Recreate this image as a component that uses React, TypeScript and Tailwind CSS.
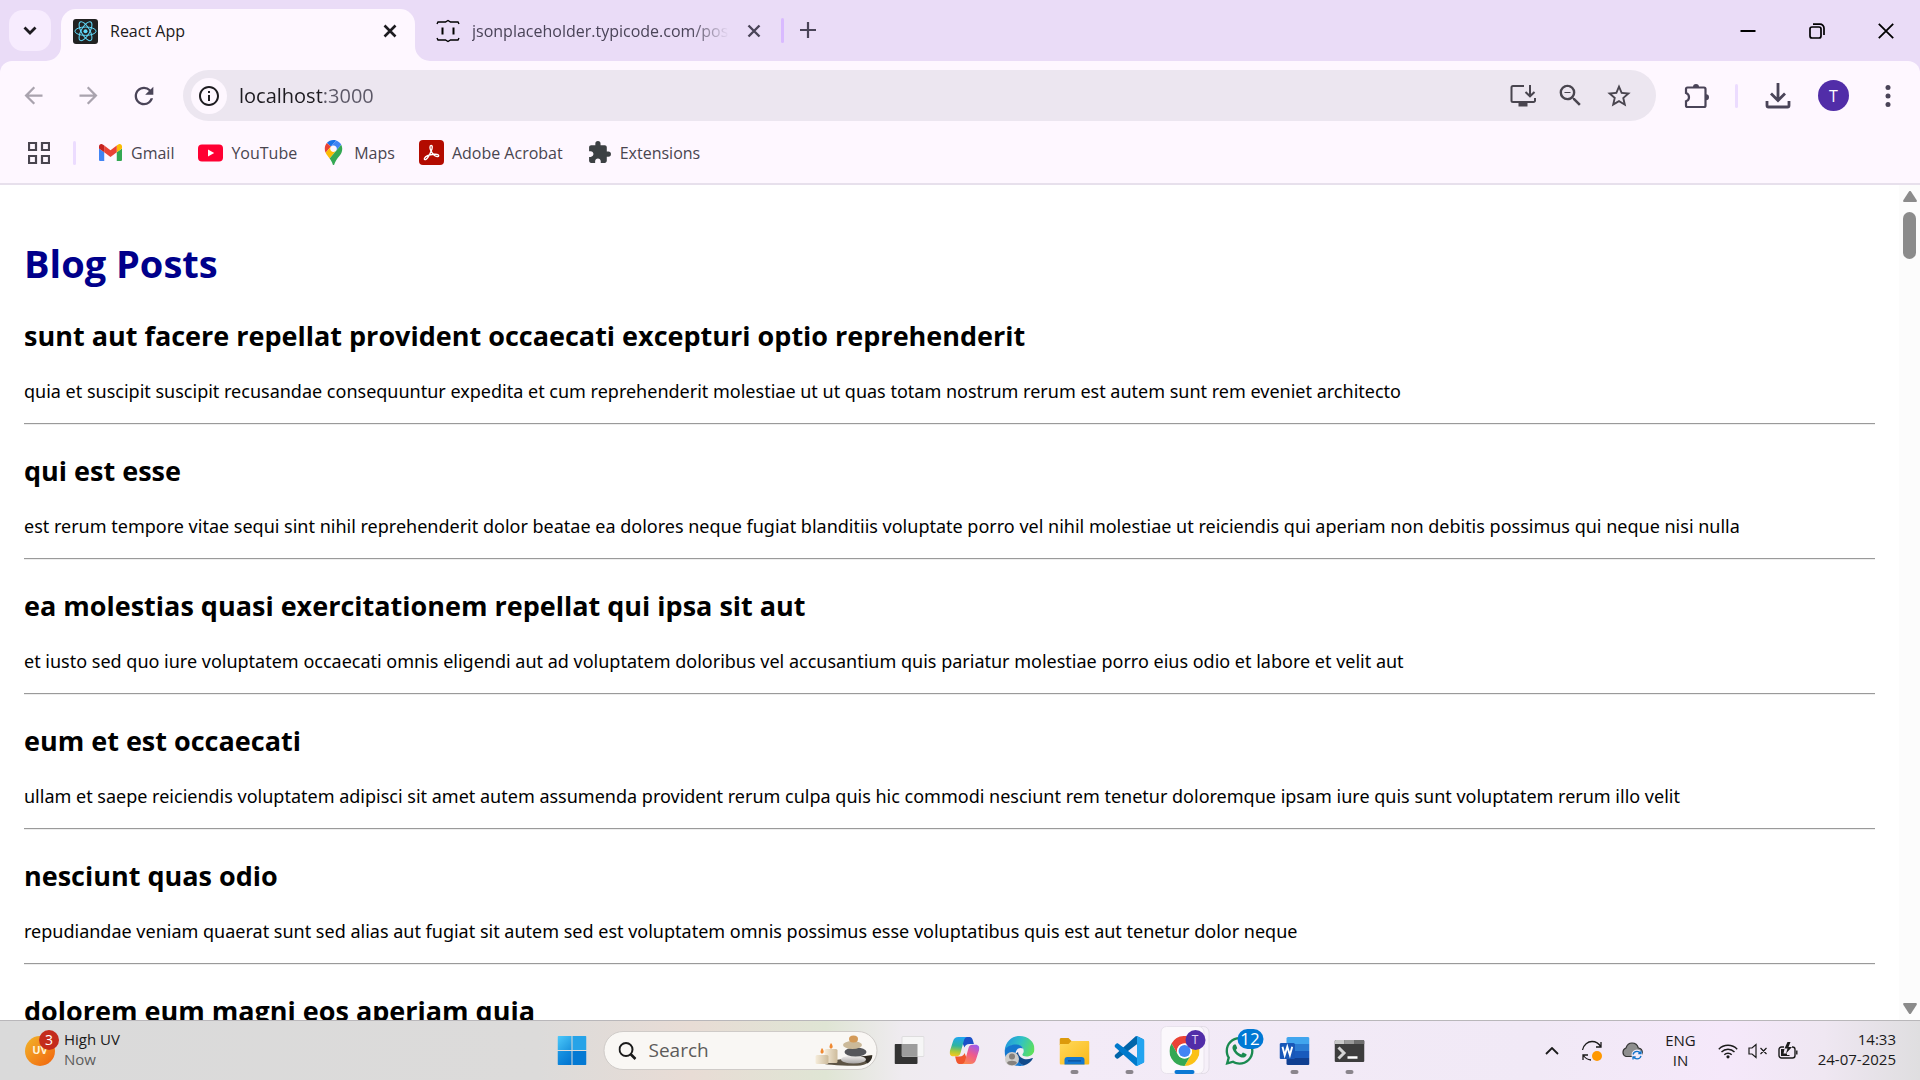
import React from "react";
import {
  MdArrowBack,
  MdArrowForward,
  MdExtension,
  MdInfoOutline,
  MdRefresh,
  MdStarBorder,
  MdZoomOut,
} from "react-icons/md";
import { FaWhatsapp } from "react-icons/fa";

type Post = { title: string; body: string };

const posts: Post[] = [
  {
    title: "sunt aut facere repellat provident occaecati excepturi optio reprehenderit",
    body: "quia et suscipit suscipit recusandae consequuntur expedita et cum reprehenderit molestiae ut ut quas totam nostrum rerum est autem sunt rem eveniet architecto",
  },
  {
    title: "qui est esse",
    body: "est rerum tempore vitae sequi sint nihil reprehenderit dolor beatae ea dolores neque fugiat blanditiis voluptate porro vel nihil molestiae ut reiciendis qui aperiam non debitis possimus qui neque nisi nulla",
  },
  {
    title: "ea molestias quasi exercitationem repellat qui ipsa sit aut",
    body: "et iusto sed quo iure voluptatem occaecati omnis eligendi aut ad voluptatem doloribus vel accusantium quis pariatur molestiae porro eius odio et labore et velit aut",
  },
  {
    title: "eum et est occaecati",
    body: "ullam et saepe reiciendis voluptatem adipisci sit amet autem assumenda provident rerum culpa quis hic commodi nesciunt rem tenetur doloremque ipsam iure quis sunt voluptatem rerum illo velit",
  },
  {
    title: "nesciunt quas odio",
    body: "repudiandae veniam quaerat sunt sed alias aut fugiat sit autem sed est voluptatem omnis possimus esse voluptatibus quis est aut tenetur dolor neque",
  },
  { title: "dolorem eum magni eos aperiam quia", body: "" },
];

/* ---------- small drawings ---------- */

function ReactFavicon() {
  return (
    <svg viewBox="0 0 25 25" className="size-[25px] shrink-0" aria-hidden="true">
      <rect width="25" height="25" rx="3" fill="#222" />
      <g fill="none" stroke="#61dafb" strokeWidth="1">
        <ellipse cx="12.5" cy="12.2" rx="10.6" ry="4.2" />
        <ellipse cx="12.5" cy="12.2" rx="10.6" ry="4.2" transform="rotate(60 12.5 12.2)" />
        <ellipse cx="12.5" cy="12.2" rx="10.6" ry="4.2" transform="rotate(120 12.5 12.2)" />
      </g>
      <circle cx="12.5" cy="12.2" r="2" fill="#61dafb" />
    </svg>
  );
}

function BracesFavicon() {
  return (
    <svg viewBox="0 0 24 24" className="size-6 shrink-0" fill="none" stroke="#000" strokeWidth="1.4" aria-hidden="true">
      <path d="M1 5l1-2h7.500L12 1.500 14.500 3H22l1 2M1 19l1 2h7.500l2.500 1.500 2.500-1.500H22l1-2" />
      <path d="M6.500 8.500V15.500M17.500 8.500V15.500" strokeWidth="2" />
    </svg>
  );
}

function Cross({ className, width }: { className: string; width: number }) {
  return (
    <svg viewBox="0 0 16 16" className={className} fill="none" stroke="currentColor" strokeWidth={width} aria-hidden="true">
      <path d="M2.500 2.500l11 11M13.500 2.500l-11 11" />
    </svg>
  );
}

function GmailIcon() {
  return (
    <svg viewBox="52 42 88 66" className="w-[23px]" aria-hidden="true">
      <path fill="#4285f4" d="M58 108h14V74L52 59v43c0 3.320 2.690 6 6 6" />
      <path fill="#34a853" d="M120 108h14c3.320 0 6-2.690 6-6V59l-20 15" />
      <path fill="#fbbc04" d="M120 48v26l20-15v-8c0-7.420-8.470-11.650-14.400-7.200" />
      <path fill="#ea4335" d="M72 74V48l24 18 24-18v26L96 92" />
      <path fill="#c5221f" d="M52 51v8l20 15V48l-5.600-4.200c-5.940-4.450-14.400-.220-14.400 7.200" />
    </svg>
  );
}

function YouTubeIcon() {
  return (
    <svg viewBox="0 0 25 18" className="w-[25px]" aria-hidden="true">
      <rect y="0.500" width="25" height="17" rx="4" fill="#ff0033" />
      <path d="M10 5.500v7L16.200 9z" fill="#fff" />
    </svg>
  );
}

function MapsIcon() {
  return (
    <svg viewBox="0 0 92.3 132.3" className="h-[25px] w-[25px]" aria-hidden="true">
      <path fill="#1a73e8" d="M60.2 2.2C55.8.8 51 0 46.1 0 32 0 19.3 6.4 10.8 16.5l21.8 18.3L60.2 2.200z" />
      <path fill="#ea4335" d="M10.8 16.5C4.1 24.5 0 34.9 0 46.100c0 8.700 1.700 15.700 4.600 22l28-33.300-21.800-18.300z" />
      <path fill="#4285f4" d="M46.2 28.5c9.8 0 17.7 7.9 17.7 17.7 0 4.300-1.600 8.300-4.200 11.400 0 0 13.900-16.600 27.500-32.700-5.600-10.800-15.300-19-27-22.700L32.600 34.800c3.300-3.800 8.100-6.300 13.600-6.300" />
      <path fill="#fbbc04" d="M46.2 63.8c-9.800 0-17.700-7.900-17.700-17.700 0-4.300 1.500-8.300 4.100-11.300l-28 33.300c4.800 10.600 12.800 19.200 21 29.900l34.100-40.500c-3.300 3.900-8.100 6.300-13.500 6.300" />
      <path fill="#34a853" d="M59.1 109.2c15.4-24.100 33.300-35 33.300-63 0-7.700-1.900-14.900-5.200-21.300L25.600 98c2.600 3.400 5.300 7.300 7.900 11.300 9.400 14.500 6.800 23.100 12.800 23.100s3.400-8.700 12.800-23.200" />
    </svg>
  );
}

function AcrobatIcon() {
  return (
    <svg viewBox="0 0 25 25" className="w-[25px]" aria-hidden="true">
      <rect width="25" height="25" rx="4" fill="#b30b00" />
      <path
        d="M11.800 10.500c-1-2.200-1.300-5 .300-5.100 1.700 0 1.300 3.200.100 5.600-1.300 3.200-3.300 7-5.200 8.300-1.100.700-2-.100-1.500-1.100.900-1.800 5-3.500 9.300-3.900 2.300-.200 5 .100 4.900 1.500-.200 1.300-2.600.900-4.200-.300-1.600-1.200-2.800-2.900-3.700-5z"
        fill="none"
        stroke="#fff"
        strokeWidth="1.400"
      />
    </svg>
  );
}

function AppsIcon() {
  return (
    <svg viewBox="0 0 22 22" className="size-[22px]" fill="none" stroke="#49454f" strokeWidth="2.200" aria-hidden="true">
      <path d="M1 1h7v7H1zM14 1h7v7h-7zM1 14h7v7H1zM14 14h7v7h-7z" />
    </svg>
  );
}

function InstallIcon() {
  return (
    <svg viewBox="0 0 26 24" className="w-[26px]" fill="none" stroke="#49454f" strokeWidth="2" aria-hidden="true">
      <path d="M14 2H3a1.500 1.500 0 0 0-1.500 1.500v13A1.500 1.500 0 0 0 3 18h20.500a1.500 1.500 0 0 0 1.500-1.500V14" />
      <path d="M20 1v11M15.500 8l4.500 4.300L24.500 8" />
      <path d="M8.500 20.500h9" strokeWidth="4" />
    </svg>
  );
}

function PuzzleOutline() {
  return (
    <svg viewBox="0 0 26 26" className="w-[26px]" aria-hidden="true">
      <path
        d="M3.500 4.500h16.500a1.500 1.500 0 0 1 1.500 1.500v16.500a1.500 1.500 0 0 1-1.500 1.500H3.500a1.500 1.500 0 0 1-1.500-1.500v-4.200c4-1.400 4-6.900 0-8.300V6a1.500 1.500 0 0 1 1.500-1.500z"
        fill="none"
        stroke="#4a4458"
        strokeWidth="2.200"
      />
      <path d="M9 4a3 3 0 0 1 6 0zM22 11.200a3 3 0 0 1 0 6z" fill="#4a4458" />
    </svg>
  );
}

function DownloadIcon() {
  return (
    <svg viewBox="0 0 26 26" className="w-[26px]" fill="none" stroke="#4a4458" strokeWidth="2.800" aria-hidden="true">
      <path d="M13 0v17M6 10.500l7 7 7-7" />
      <path d="M2 18v4.500a1.500 1.500 0 0 0 1.500 1.500h19a1.500 1.500 0 0 0 1.500-1.500V18" />
    </svg>
  );
}

function WindowsLogo() {
  return (
    <svg viewBox="0 0 29 29" className="size-[29px]" aria-hidden="true">
      <defs>
        <linearGradient id="win" x1="0" y1="0" x2="1" y2="1">
          <stop offset="0" stopColor="#4cc9fb" />
          <stop offset="1" stopColor="#1b93dd" />
        </linearGradient>
        <linearGradient id="win2" x1="0" y1="0" x2="1" y2="1">
          <stop offset="0" stopColor="#1a97e4" />
          <stop offset="1" stopColor="#0072cf" />
        </linearGradient>
      </defs>
      <path d="M1 0h13v14H0V1a1 1 0 0 1 1-1z" fill="url(#win)" />
      <path d="M15 0h13a1 1 0 0 1 1 1v13H15z" fill="#26a3e8" />
      <path d="M0 15h14v14H1a1 1 0 0 1-1-1z" fill="url(#win2)" />
      <path d="M15 15h14v13a1 1 0 0 1-1 1H15z" fill="#0479d3" />
    </svg>
  );
}

function ZenPicture() {
  return (
    <svg viewBox="0 0 58 32" className="h-8 w-[58px] shrink-0" aria-hidden="true">
      <defs>
        <linearGradient id="candle" x1="0" x2="1">
          <stop offset="0" stopColor="#f6eddb" />
          <stop offset="1" stopColor="#cdbb9b" />
        </linearGradient>
        <linearGradient id="stone" x1="0" y1="0" x2="0" y2="1">
          <stop offset="0" stopColor="#f3f1ef" />
          <stop offset="1" stopColor="#a9a6a5" />
        </linearGradient>
      </defs>
      <path d="M2 27.500L58 20c-1 5-5 11-16 10.800C25 31 10 29.500 2 27.500z" fill="#5d5444" />
      <path d="M46 21.500l12-1c-.500 3-2 6-5 8z" fill="#2f2a22" />
      <rect x="10" y="14" width="13" height="14" rx="1.500" fill="url(#candle)" />
      <rect x="1" y="20" width="13" height="9" rx="1.500" fill="url(#candle)" />
      <path d="M16.500 8c2.500 3 2 5.500 0 5.500s-2-2.500 0-5.500zM7.500 13c2.500 3 2 5.500 0 5.500s-2-2.500 0-5.500z" fill="#f08a32" />
      <ellipse cx="39" cy="24.500" rx="12.500" ry="4" fill="url(#stone)" />
      <ellipse cx="41" cy="17" rx="11" ry="4.500" fill="#55565a" />
      <ellipse cx="38" cy="10" rx="9.500" ry="4" fill="#cbb999" />
      <ellipse cx="39" cy="4" rx="4.500" ry="3.500" fill="#d39a58" />
    </svg>
  );
}

function TaskViewIcon() {
  return (
    <svg viewBox="0 0 30 30" className="size-[30px]" aria-hidden="true">
      <rect x="0" y="8" width="23" height="20" rx="1" fill="#333" />
      <rect x="7.500" y="0.500" width="22" height="20" rx="1" fill="#f6f6f6" stroke="#d0d0d0" strokeWidth="0.600" />
      <path d="M7.500 8H23v12.500H8.500a1 1 0 0 1-1-1z" fill="#9c9c9c" />
    </svg>
  );
}

function CopilotIcon() {
  return (
    <svg viewBox="0 0 30 30" className="size-[30px]" aria-hidden="true">
      <defs>
        <linearGradient id="cpA" x1="0.400" y1="0" x2="0.300" y2="1">
          <stop offset="0" stopColor="#1fa6f0" />
          <stop offset="0.450" stopColor="#2fb4a0" />
          <stop offset="0.750" stopColor="#a8c83a" />
          <stop offset="1" stopColor="#f8c81c" />
        </linearGradient>
        <linearGradient id="cpB" x1="0.700" y1="0" x2="0.200" y2="1">
          <stop offset="0" stopColor="#a05be8" />
          <stop offset="0.450" stopColor="#ef5a8c" />
          <stop offset="1" stopColor="#fb8a4e" />
        </linearGradient>
      </defs>
      <path d="M14 1h6c2 0 2.800 1.400 3.400 3.500l1 3.500H20c-3 0-4.300 1.200-5 3.500L12 5z" fill="#1b51c8" />
      <path d="M9 1h9c-2 0-3 1.400-3.600 3.500L11 17c-.700 2.200-1.800 3.300-4 3.300H4C.8 20.300-.3 18 .4 15L3.600 5C4.500 2.300 6 1 9 1z" fill="url(#cpA)" />
      <path d="M16 28h-6c-2 0-2.800-1.400-3.400-3.500l-1-4H10c3 0 4.300-1.200 5-3.500L18 24z" fill="#f0562e" />
      <path d="M21 28h-9c2 0 3-1.400 3.600-3.500L19 12c.700-2.200 1.800-3.300 4-3.300h3c3.200 0 4.300 2.300 3.600 5.300L26.400 24c-.900 2.700-2.400 4-5.400 4z" fill="url(#cpB)" />
    </svg>
  );
}

function EdgeIcon() {
  return (
    <svg viewBox="0 0 30 30" className="size-[30px]" aria-hidden="true">
      <defs>
        <linearGradient id="edA" x1="0" y1="0.300" x2="1" y2="0.600">
          <stop offset="0" stopColor="#2196e0" />
          <stop offset="0.500" stopColor="#31c2c4" />
          <stop offset="1" stopColor="#5fe05a" />
        </linearGradient>
      </defs>
      <path d="M0 15C1 5 8 0 15 0c9 0 15 6 15 13 0 5-4 7.500-8 7.500-3 0-4.500-1-4-2.200.700-1 1.200-2 1.200-3.300 0-3.500-3-6-7.200-6C6 9 1 12 0 15z" fill="url(#edA)" />
      <path d="M0 15c1-4 6-6.500 11.500-6.500 3.500 0 6 1.500 7.200 4C14 10.500 10.500 14 11 19c.400 5 4 9 9 10.300-2 .700-4 .700-5 .700C7 30 0 24 0 15z" fill="#1577cf" />
      <path d="M11 18c0 6 4.500 10.500 9 11.300 3.500-1 6.500-3.300 8.200-6.500.300-.700-.300-1-1-.600-7 3-13.200-.700-13.700-6.200z" fill="#114a8b" />
      <circle cx="7.500" cy="23" r="7" fill="#cfcdca" />
      <circle cx="7.500" cy="20.500" r="3" fill="#85817d" />
      <path d="M2.500 27c.500-3 9.500-3 10 0-2 3-8 3-10 0z" fill="#85817d" />
    </svg>
  );
}

function ExplorerIcon() {
  return (
    <svg viewBox="0 0 30 30" className="size-[30px]" aria-hidden="true">
      <defs>
        <linearGradient id="fold" x1="0" y1="0" x2="1" y2="1">
          <stop offset="0" stopColor="#ffd95c" />
          <stop offset="1" stopColor="#fbb917" />
        </linearGradient>
      </defs>
      <path d="M0 3.500A1.500 1.500 0 0 1 1.500 2H9l3 3h17v4H0z" fill="#dc9a0c" />
      <path d="M0 8h9l3-3h16.500A1.500 1.500 0 0 1 30 6.500V27a1.500 1.500 0 0 1-1.500 1.500h-27A1.500 1.500 0 0 1 0 27z" fill="url(#fold)" />
      <path d="M5 28.500V24a3 3 0 0 1 3-3h14a3 3 0 0 1 3 3v4.500z" fill="#1277d0" />
      <path d="M8.500 24.800h13" stroke="#0b4f97" strokeWidth="1.200" />
    </svg>
  );
}

function VsCodeIcon() {
  return (
    <svg viewBox="0 0 100 100" className="size-[30px]" aria-hidden="true">
      <path d="M96.5 10.800L75.900.900a6.200 6.200 0 0 0-7.100 1.200L1.300 63.600a4.200 4.200 0 0 0 0 6.200l5.500 5c1.500 1.300 3.700 1.400 5.300.200l81.200-61.600c2.700-2.100 6.700-.100 6.700 3.300v-.200c0-2.400-1.400-4.600-3.500-5.700z" fill="#0065a9" />
      <path d="M96.5 89.200l-20.600 9.900a6.200 6.200 0 0 1-7.100-1.200L1.300 36.400a4.200 4.200 0 0 1 0-6.200l5.500-5c1.500-1.300 3.700-1.400 5.300-.200l81.200 61.600c2.700 2.100 6.700.100 6.700-3.300v.200c0 2.400-1.400 4.600-3.500 5.700z" fill="#007acc" />
      <path d="M75.900 99.100a6.200 6.200 0 0 1-7.100-1.200c2.300 2.300 6.200.700 6.200-2.600V4.700c0-3.300-3.900-4.900-6.200-2.600a6.200 6.200 0 0 1 7.100-1.200l20.600 9.900a6.300 6.300 0 0 1 3.500 5.700v67.100c0 2.400-1.400 4.600-3.500 5.700z" fill="#23a4f0" />
    </svg>
  );
}

function ChromeIcon() {
  return (
    <svg viewBox="0 0 48 48" className="size-[30px]" aria-hidden="true">
      <path d="M3.200 12A24 24 0 0 1 44.800 12H24a12 12 0 0 0-10.400 18z" fill="#ea4335" />
      <path d="M44.800 12A24 24 0 0 1 24 48l10.400-18A12 12 0 0 0 24 12z" fill="#fbc116" />
      <path d="M24 48A24 24 0 0 1 3.200 12l10.400 18a12 12 0 0 0 20.800 0z" fill="#34a853" />
      <circle cx="24" cy="24" r="12" fill="#fff" />
      <circle cx="24" cy="24" r="9.500" fill="#4285f4" />
    </svg>
  );
}

function WordIcon() {
  return (
    <svg viewBox="0 0 30 30" className="size-[30px]" aria-hidden="true">
      <path d="M7 2.500A1.500 1.500 0 0 1 8.500 1h20A1.500 1.500 0 0 1 30 2.500V8H7z" fill="#41a5ee" />
      <path d="M7 8h23v7H7z" fill="#2b7cd3" />
      <path d="M7 15h23v7H7z" fill="#185abd" />
      <path d="M7 22h23v5.500a1.500 1.500 0 0 1-1.500 1.500h-20A1.500 1.500 0 0 1 7 27.500z" fill="#103f91" />
      <rect x="0" y="7" width="15.500" height="16" rx="1.500" fill="#1857b8" />
      <path d="M3 10.800l2.200 8.400 2.600-8.400 2.600 8.400 2.300-8.400" fill="none" stroke="#fff" strokeWidth="1.900" />
    </svg>
  );
}

function TerminalIcon() {
  return (
    <svg viewBox="0 0 30 30" className="size-[30px]" aria-hidden="true">
      <rect x="0" y="4" width="30" height="22" rx="1.500" fill="#3d3d3d" />
      <path d="M0 8V5.500A1.500 1.500 0 0 1 1.500 4H10v4z" fill="#c9c9c9" />
      <path d="M10 4h10v4H10z" fill="#9a9a9a" />
      <path d="M20 4h8.500A1.500 1.500 0 0 1 30 5.500V8H20z" fill="#6e6e6e" />
      <path d="M4 11.500l5.500 5.500L4 22.500" fill="none" stroke="#d4d4d4" strokeWidth="3" />
      <path d="M13 21.500h10" stroke="#fff" strokeWidth="2.500" />
    </svg>
  );
}

function SyncIcon() {
  return (
    <svg viewBox="0 0 22 22" className="size-[22px]" fill="none" stroke="#1b1b1b" strokeWidth="1.300" aria-hidden="true">
      <path d="M1.500 10C2.500 4.500 7 1.500 11 1.500c4 0 7 2 9 5.500M20 2v5h-5" />
      <path d="M2 20v-5h5M2 15c2 3 4.500 4.800 8 5" />
      <circle cx="16" cy="16" r="5" fill="#ff9800" stroke="none" />
    </svg>
  );
}

function CloudIcon() {
  return (
    <svg viewBox="0 0 22 18" className="w-[22px]" aria-hidden="true">
      <path d="M5 14.500A4.500 4.500 0 0 1 5 6C6 2.800 8.500 1 11 1c3.500 0 5.500 2 6.300 5 2.500.300 4 2 4 4.300 0 2.500-1.800 4.200-4.300 4.200z" fill="#8e8e8e" stroke="#333" strokeWidth="1.200" />
      <circle cx="16" cy="13" r="5.500" fill="#f3eaf7" />
      <path d="M12 12.500c.500-2 2-3.200 4-3.200 1.500 0 2.700.700 3.500 1.900M20 8.800v2.700h-2.700M20 13.800c-.500 2-2 3-4 3-1.500 0-2.700-.700-3.500-1.700M12 17.500v-2.700h2.700" fill="none" stroke="#1173c9" strokeWidth="1.300" />
    </svg>
  );
}

function WifiGlyph() {
  return (
    <svg viewBox="0 0 20 16" className="w-5" fill="none" stroke="#1b1b1b" strokeWidth="1.400" aria-hidden="true">
      <path d="M.800 6.200c5-5.200 13.400-5.200 18.400 0M3.500 9c3.600-3.700 9.400-3.700 13 0M6.300 11.800c2-2.100 5.400-2.100 7.400 0" />
      <circle cx="10" cy="13.800" r="1.600" fill="#1b1b1b" stroke="none" />
    </svg>
  );
}

function MutedGlyph() {
  return (
    <svg viewBox="0 0 20 16" className="w-5" fill="none" stroke="#1b1b1b" strokeWidth="1.200" aria-hidden="true">
      <path d="M1 5h3l4-3.500v13L4 11H1zM12.500 5l6 6M18.500 5l-6 6" />
    </svg>
  );
}

function BatteryGlyph() {
  return (
    <svg viewBox="0 0 20 18" className="w-5" aria-hidden="true">
      <path d="M6 5H3.500A2.500 2.500 0 0 0 1 7.500v6A2.500 2.500 0 0 0 3.500 16h11a2.500 2.500 0 0 0 2.500-2.500v-6A2.500 2.500 0 0 0 14.500 5H14M18.800 8.500v4" fill="none" stroke="#1b1b1b" strokeWidth="1.400" />
      <path d="M3 7h3.500l-1 4.500H9v1.500h2.500V14H3z" fill="#1b1b1b" />
      <path d="M9.500 0L6.500 6.500h3L8 11.500 14 5h-3.500L12.500 0z" fill="#1b1b1b" />
    </svg>
  );
}

/* ---------- browser window ---------- */

function TabStrip() {
  return (
    <div className="flex h-[61px] shrink-0 items-end bg-[#eadcf7] text-[#1d1b20]">
      <button aria-label="Search tabs" className="mb-2.5 ml-[9px] flex h-[41px] w-[42px] items-center justify-center rounded-[14px] bg-[#f7ecfe]">
        <svg viewBox="0 0 14 10" className="w-3.5" fill="none" stroke="currentColor" strokeWidth="2.800">
          <path d="M1.500 1.500L7 7l5.500-5.500" />
        </svg>
      </button>

      <div className="relative ml-2.5 flex h-[52px] w-[354px] items-center rounded-t-[15px] bg-[#fef7ff] pr-2 pb-2 pl-3">
        <svg viewBox="0 0 15 15" className="absolute bottom-0 -left-[15px] size-[15px]" fill="#fef7ff" aria-hidden="true">
          <path d="M15 0v15H0A15 15 0 0 0 15 0z" />
        </svg>
        <svg viewBox="0 0 15 15" className="absolute -right-[15px] bottom-0 size-[15px]" fill="#fef7ff" aria-hidden="true">
          <path d="M0 0v15h15A15 15 0 0 1 0 0z" />
        </svg>
        <ReactFavicon />
        <span className="ml-3 flex-1 text-base">React App</span>
        <button aria-label="Close tab" className="flex size-[34px] items-center justify-center">
          <Cross className="size-4" width={2.6} />
        </button>
      </div>

      <div className="flex h-[52px] w-[364px] items-center pb-2 pl-[21px] text-[#4a4458]">
        <BracesFavicon />
        <span className="ml-3 w-[257px] overflow-hidden mask-r-from-85% text-base whitespace-nowrap">jsonplaceholder.typicode.com/posts</span>
        <button aria-label="Close tab" className="ml-2 flex size-[34px] items-center justify-center">
          <Cross className="size-4" width={2.4} />
        </button>
      </div>

      <div className="mb-[18px] ml-0.5 h-[25px] w-[3px] rounded-sm bg-[#d9baff]" />
      <button aria-label="New tab" className="mb-[15px] ml-2 flex size-8 items-center justify-center text-[#4a4458]">
        <svg viewBox="0 0 16 16" className="size-4" fill="none" stroke="currentColor" strokeWidth="2.200">
          <path d="M8 0v16M0 8h16" />
        </svg>
      </button>

      <div className="ml-auto flex h-full text-black">
        <button aria-label="Minimize" className="flex w-[69px] items-center justify-center">
          <svg viewBox="0 0 16 16" className="size-4" stroke="currentColor" strokeWidth="2">
            <path d="M.500 8h15" />
          </svg>
        </button>
        <button aria-label="Restore" className="flex w-[69px] items-center justify-center">
          <svg viewBox="0 0 16 16" className="size-4" fill="none" stroke="currentColor" strokeWidth="1.700">
            <rect x="1" y="4" width="11" height="11" rx="2" />
            <path d="M4 1.200h7a4 4 0 0 1 4 4V12" />
          </svg>
        </button>
        <button aria-label="Close" className="flex w-[69px] items-center justify-center">
          <svg viewBox="0 0 16 16" className="size-4" fill="none" stroke="currentColor" strokeWidth="1.800">
            <path d="M.800.800l14.400 14.400M15.200.800L.800 15.200" />
          </svg>
        </button>
      </div>
    </div>
  );
}

function Toolbar() {
  return (
    <div className="bg-[#eadcf7]">
      <div className="flex h-[69px] items-center rounded-t-xl bg-[#fef7ff] text-[#4a4458]">
        <div className="flex pl-1.5">
          <button aria-label="Back" className="flex h-12 w-[55px] items-center justify-center text-[#a9a3ae]">
            <MdArrowBack size={27} />
          </button>
          <button aria-label="Forward" className="flex h-12 w-[55px] items-center justify-center text-[#a9a3ae]">
            <MdArrowForward size={27} />
          </button>
          <button aria-label="Reload" className="flex h-12 w-[55px] items-center justify-center">
            <MdRefresh size={28} />
          </button>
        </div>

        <div className="ml-3 flex h-[51px] flex-1 items-center rounded-full bg-[#ece6f0] pr-[23px] pl-2">
          <button aria-label="View site information" className="flex size-9 items-center justify-center rounded-full bg-[#fef7ff] text-[#1d1b20]">
            <MdInfoOutline size={24} />
          </button>
          <input
            aria-label="Address"
            defaultValue="localhost:3000"
            className="ml-3 min-w-0 flex-1 bg-[linear-gradient(to_right,#1d1b20_85px,#5b5766_85px)] bg-clip-text text-xl text-transparent outline-none"
          />
          <div className="flex items-center gap-5 text-[#49454f]">
            <button aria-label="Install app"><InstallIcon /></button>
            <button aria-label="Zoom"><MdZoomOut size={29} /></button>
            <button aria-label="Bookmark this tab"><MdStarBorder size={28} /></button>
          </div>
        </div>

        <div className="flex items-center pl-7">
          <button aria-label="Extensions"><PuzzleOutline /></button>
          <div className="ml-[25px] h-6 w-[3px] rounded-sm bg-[#ecdcff]" />
          <button aria-label="Downloads" className="ml-[27px]"><DownloadIcon /></button>
          <button aria-label="Profile" className="ml-[27px] flex size-[31px] items-center justify-center rounded-full bg-[#512da8] text-base text-white">
            T
          </button>
          <button aria-label="Menu" className="mr-[21px] ml-[28px] flex w-[22px] justify-center">
            <svg viewBox="0 0 6 22" className="h-[22px]" fill="currentColor">
              <circle cx="3" cy="2.600" r="2.500" />
              <circle cx="3" cy="11" r="2.500" />
              <circle cx="3" cy="19.400" r="2.500" />
            </svg>
          </button>
        </div>
      </div>
    </div>
  );
}

function Bookmark({ icon, label }: { icon: React.ReactNode; label: string }) {
  return (
    <a href="#" className="flex items-center gap-2">
      <span className="flex w-[25px] justify-center">{icon}</span>
      <span>{label}</span>
    </a>
  );
}

function BookmarksBar() {
  return (
    <nav className="flex h-[55px] shrink-0 items-center border-b-2 border-[#e7e0ec] bg-[#fef7ff] pb-2 pl-7 text-base text-[#49454f]">
      <button aria-label="Apps"><AppsIcon /></button>
      <div className="mr-[22px] ml-[23px] h-6 w-[3px] rounded-sm bg-[#ecdcff]" />
      <div className="flex gap-6">
        <Bookmark icon={<GmailIcon />} label="Gmail" />
        <Bookmark icon={<YouTubeIcon />} label="YouTube" />
        <Bookmark icon={<MapsIcon />} label="Maps" />
        <Bookmark icon={<AcrobatIcon />} label="Adobe Acrobat" />
        <Bookmark icon={<MdExtension size={25} color="#3c4043" />} label="Extensions" />
      </div>
    </nav>
  );
}

function Scrollbar() {
  return (
    <div className="flex w-[21px] shrink-0 flex-col items-center bg-[#fcfcfc] py-1.5" aria-hidden="true">
      <svg viewBox="0 0 14 11" className="w-3.5" fill="#8b8b8b">
        <path d="M5.800.700a1.500 1.500 0 0 1 2.400 0l5.500 8.500c.400.900 0 1.800-1 1.800H1.300c-1 0-1.400-.900-1-1.800z" />
      </svg>
      <div className="mt-[10px] h-[47px] w-[13px] rounded-full bg-[#8b8b8b]" />
      <svg viewBox="0 0 14 11" className="mt-auto w-3.5 rotate-180" fill="#8b8b8b">
        <path d="M5.800.700a1.500 1.500 0 0 1 2.400 0l5.500 8.500c.400.900 0 1.800-1 1.800H1.300c-1 0-1.400-.900-1-1.800z" />
      </svg>
    </div>
  );
}

function BlogPage() {
  return (
    <div className="flex min-h-0 flex-1 bg-white">
      <main className="min-w-0 flex-1 overflow-hidden px-6 pt-[53px] text-black">
        <h1 className="mb-0.5 text-[38px] leading-[50px] font-bold text-[#00008b]">Blog Posts</h1>
        {posts.map((post) => (
          <article key={post.title}>
            <h2 className="pt-7 text-[27px] leading-9 font-bold whitespace-nowrap">{post.title}</h2>
            <p className="mt-[23px] mb-[18px] min-h-7 font-['Noto_Sans',sans-serif] text-lg leading-7 whitespace-nowrap">{post.body}</p>
            <hr className="border-t border-b border-t-[#9a9a9a] border-b-[#eeeeee]" />
          </article>
        ))}
      </main>
      <Scrollbar />
    </div>
  );
}

/* ---------- desktop taskbar ---------- */

function TaskButton({ label, running, children }: { label: string; running?: boolean; children: React.ReactNode }) {
  return (
    <button aria-label={label} className="relative flex h-full w-[55px] items-center justify-center">
      {children}
      {running && <span className="absolute bottom-1.5 h-1 w-2 rounded-full bg-[#8a858c]" />}
    </button>
  );
}

function Taskbar() {
  return (
    <footer className="relative flex h-[60px] shrink-0 justify-between border-t border-[#b9b7ba] bg-[linear-gradient(to_right,#dadada_0%,#dcdbda_28%,#e8dcd5_36%,#dfe5d4_43%,#efebf0_47%,#f3ebf7_55%,#f1e9f6_80%,#f5e8fa_90%,#efe7f2_95%,#dfdee0_100%)] text-[#1b1b1b]">
      <button className="flex items-center pl-[25px] text-left">
        <span className="relative flex size-[30px] items-center justify-center rounded-full bg-linear-to-br from-[#f0b429] to-[#f0600c] text-[11px] font-bold text-[#fff3d6]">
          UV
          <span className="absolute -top-1.5 left-3.5 flex size-5 items-center justify-center rounded-full bg-[#c42b1c] text-sm font-normal text-white">3</span>
        </span>
        <span className="ml-[9px] flex flex-col pb-1 text-[15px] leading-5">
          <span>High UV</span>
          <span className="text-[#5d5d5d]">Now</span>
        </span>
      </button>

      <div className="absolute inset-y-0 left-1/2 flex -translate-x-1/2 items-center">
        <button aria-label="Start" className="mr-[17px] ml-3.5"><WindowsLogo /></button>
        <label className="mr-1 flex h-[39px] w-[274px] items-center rounded-full border border-[#cfcbc8] bg-[#f9f7f4] pr-1 pl-3.5">
          <svg viewBox="0 0 18 18" className="size-[18px] shrink-0" fill="none" stroke="#1b1b1b" strokeWidth="2">
            <circle cx="7.500" cy="7.500" r="6.500" />
            <path d="M12 12l5 5" strokeWidth="2.600" />
          </svg>
          <input aria-label="Search" placeholder="Search" className="ml-3 min-w-0 flex-1 text-[19px] outline-none placeholder:text-[#5d5b5a]" />
          <ZenPicture />
        </label>
        <TaskButton label="Task view"><TaskViewIcon /></TaskButton>
        <TaskButton label="Copilot"><CopilotIcon /></TaskButton>
        <TaskButton label="Microsoft Edge"><EdgeIcon /></TaskButton>
        <TaskButton label="File Explorer" running><ExplorerIcon /></TaskButton>
        <TaskButton label="Visual Studio Code" running><VsCodeIcon /></TaskButton>
        <button aria-label="Google Chrome" className="relative flex h-full w-[55px] items-center justify-center">
          <span className="absolute top-[5px] right-0.5 h-12 w-6 rounded-md border border-[#e2dce6] bg-[#f6f0f9]" />
          <span className="absolute top-[5px] left-1 h-12 w-[44px] rounded-md border border-[#e8e2ec] bg-[#fbf8fc]" />
          <span className="relative flex">
            <ChromeIcon />
            <span className="absolute -top-1.5 left-4 flex size-5 items-center justify-center rounded-full bg-[#512da8] text-xs text-[#e3d6f7]">T</span>
          </span>
          <span className="absolute bottom-1.5 h-1 w-5 rounded-full bg-[#0a78d4]" />
        </button>
        <TaskButton label="WhatsApp">
          <span className="relative flex">
            <FaWhatsapp size={32} color="#1a8a50" />
            <span className="absolute -top-1.5 left-[14px] flex h-5 w-[26px] items-center justify-center rounded-full bg-[#0078d4] text-[17px] text-white">12</span>
          </span>
        </TaskButton>
        <TaskButton label="Word" running><WordIcon /></TaskButton>
        <TaskButton label="Terminal" running><TerminalIcon /></TaskButton>
      </div>

      <div className="flex items-center pr-6">
        <button aria-label="Show hidden icons">
          <svg viewBox="0 0 14 8" className="w-3.5" fill="none" stroke="currentColor" strokeWidth="1.800">
            <path d="M1 7l6-6 6 6" />
          </svg>
        </button>
        <button aria-label="Updates" className="ml-[22px]"><SyncIcon /></button>
        <button aria-label="OneDrive" className="ml-[18px]"><CloudIcon /></button>
        <button className="ml-[22px] flex flex-col items-center pb-0.5 text-[15px] leading-5">
          <span>ENG</span>
          <span>IN</span>
        </button>
        <button aria-label="Network, volume and battery" className="ml-[22px] flex items-center gap-2.5">
          <WifiGlyph />
          <MutedGlyph />
          <BatteryGlyph />
        </button>
        <button className="ml-5 flex flex-col items-end pb-1 text-[15px] leading-5">
          <span>14:33</span>
          <span>24-07-2025</span>
        </button>
      </div>
    </footer>
  );
}

export default function App() {
  return (
    <div className="flex h-screen flex-col overflow-hidden font-['Open_Sans','Noto_Sans',sans-serif]">
      <TabStrip />
      <Toolbar />
      <BookmarksBar />
      <BlogPage />
      <Taskbar />
    </div>
  );
}
